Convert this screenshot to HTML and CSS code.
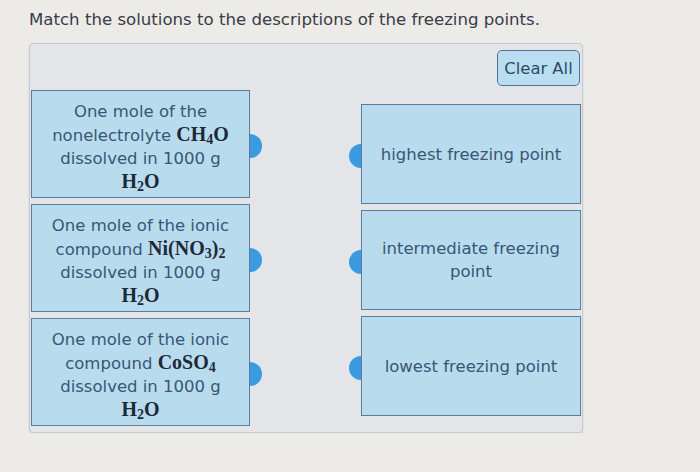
FILE: index.html
```html
<!DOCTYPE html>
<html lang="en">
<head>
  <meta charset="UTF-8">
  <title>Freezing points</title>
  <link rel="stylesheet" href="styles.css">
</head>
<body>
  <p class="prompt">Match the solutions to the descriptions of the freezing points.</p>
  <div class="match-panel">
    <div class="panel-top">
      <button class="clear-btn">Clear All</button>
    </div>
    <div class="match-cols">
      <div class="col col-left">
        <div class="card card-src">
          <span>One mole of the</span>
          <span>nonelectrolyte <b class="chem">CH<sub>4</sub>O</b></span>
          <span>dissolved in 1000 g</span>
          <span><b class="chem">H<sub>2</sub>O</b></span>
          <i class="dot dot-right"></i>
        </div>
        <div class="card card-src">
          <span>One mole of the ionic</span>
          <span>compound <b class="chem">Ni(NO<sub>3</sub>)<sub>2</sub></b></span>
          <span>dissolved in 1000 g</span>
          <span><b class="chem">H<sub>2</sub>O</b></span>
          <i class="dot dot-right"></i>
        </div>
        <div class="card card-src">
          <span>One mole of the ionic</span>
          <span>compound <b class="chem">CoSO<sub>4</sub></b></span>
          <span>dissolved in 1000 g</span>
          <span><b class="chem">H<sub>2</sub>O</b></span>
          <i class="dot dot-right"></i>
        </div>
      </div>
      <div class="col col-right">
        <div class="card card-dst">
          <span>highest freezing point</span>
          <i class="dot dot-left"></i>
        </div>
        <div class="card card-dst">
          <span>intermediate freezing<br>point</span>
          <i class="dot dot-left"></i>
        </div>
        <div class="card card-dst">
          <span>lowest freezing point</span>
          <i class="dot dot-left"></i>
        </div>
      </div>
    </div>
  </div>
</body>
</html>
```

FILE: styles.css
```css
body {
  margin: 0;
  padding: 0 0 0 29px;
  background: #ecebe7;
  font-family: 'DejaVu Sans', Verdana, sans-serif;
  color: #3a3c46;
}
.prompt {
  margin: 0;
  padding-top: 10px;
  height: 33px;
  font-size: 16.6px;
  line-height: 20px;
}
.match-panel {
  width: 550px;
  height: 382px;
  padding: 6px 1px 0 1px;
  background: #e3e5e9;
  border: 1px solid #c6c9d0;
  border-radius: 4px;
  box-shadow: 0 1px 2px rgba(0,0,0,0.12);
}
.panel-top {
  display: flex;
  justify-content: flex-end;
  height: 40px;
}
.clear-btn {
  height: 36px;
  width: 83px;
  padding: 0;
  margin-right: 1px;
  background: #b9def0;
  border: 1px solid #51709a;
  border-radius: 5px;
  color: #2f4a68;
  font-family: 'DejaVu Sans', Verdana, sans-serif;
  font-size: 16.4px;
}
.match-cols {
  display: grid;
  grid-template-columns: 219px 220px;
  column-gap: 111px;
}
.col {
  display: flex;
  flex-direction: column;
  gap: 6px;
}
.col-right {
  padding-top: 14px;
}
.card {
  position: relative;
  box-sizing: border-box;
  display: flex;
  flex-direction: column;
  align-items: center;
  justify-content: center;
  background: #b8dcee;
  border: 1px solid #5b7c9e;
  color: #3a5576;
  font-size: 16.5px;
  text-align: center;
  white-space: nowrap;
}
.card-src {
  height: 108px;
  line-height: 23px;
  padding-top: 5px;
}
.card-dst {
  height: 100px;
  line-height: 23px;
}
.chem {
  font-family: 'Liberation Serif', 'DejaVu Serif', serif;
  font-size: 20px;
  color: #1f2836;
}
.chem sub {
  font-size: 14px;
  vertical-align: -3px;
  line-height: 0;
}
/* half-circle handles sticking out of the card edge */
.dot {
  position: absolute;
  top: 50%;
  width: 12px;
  height: 24px;
  margin-top: -10px;
  background: #3a9be0;
}
.dot-right {
  right: -13px;
  border-radius: 0 12px 12px 0;
}
.dot-left {
  left: -13px;
  border-radius: 12px 0 0 12px;
}
```
